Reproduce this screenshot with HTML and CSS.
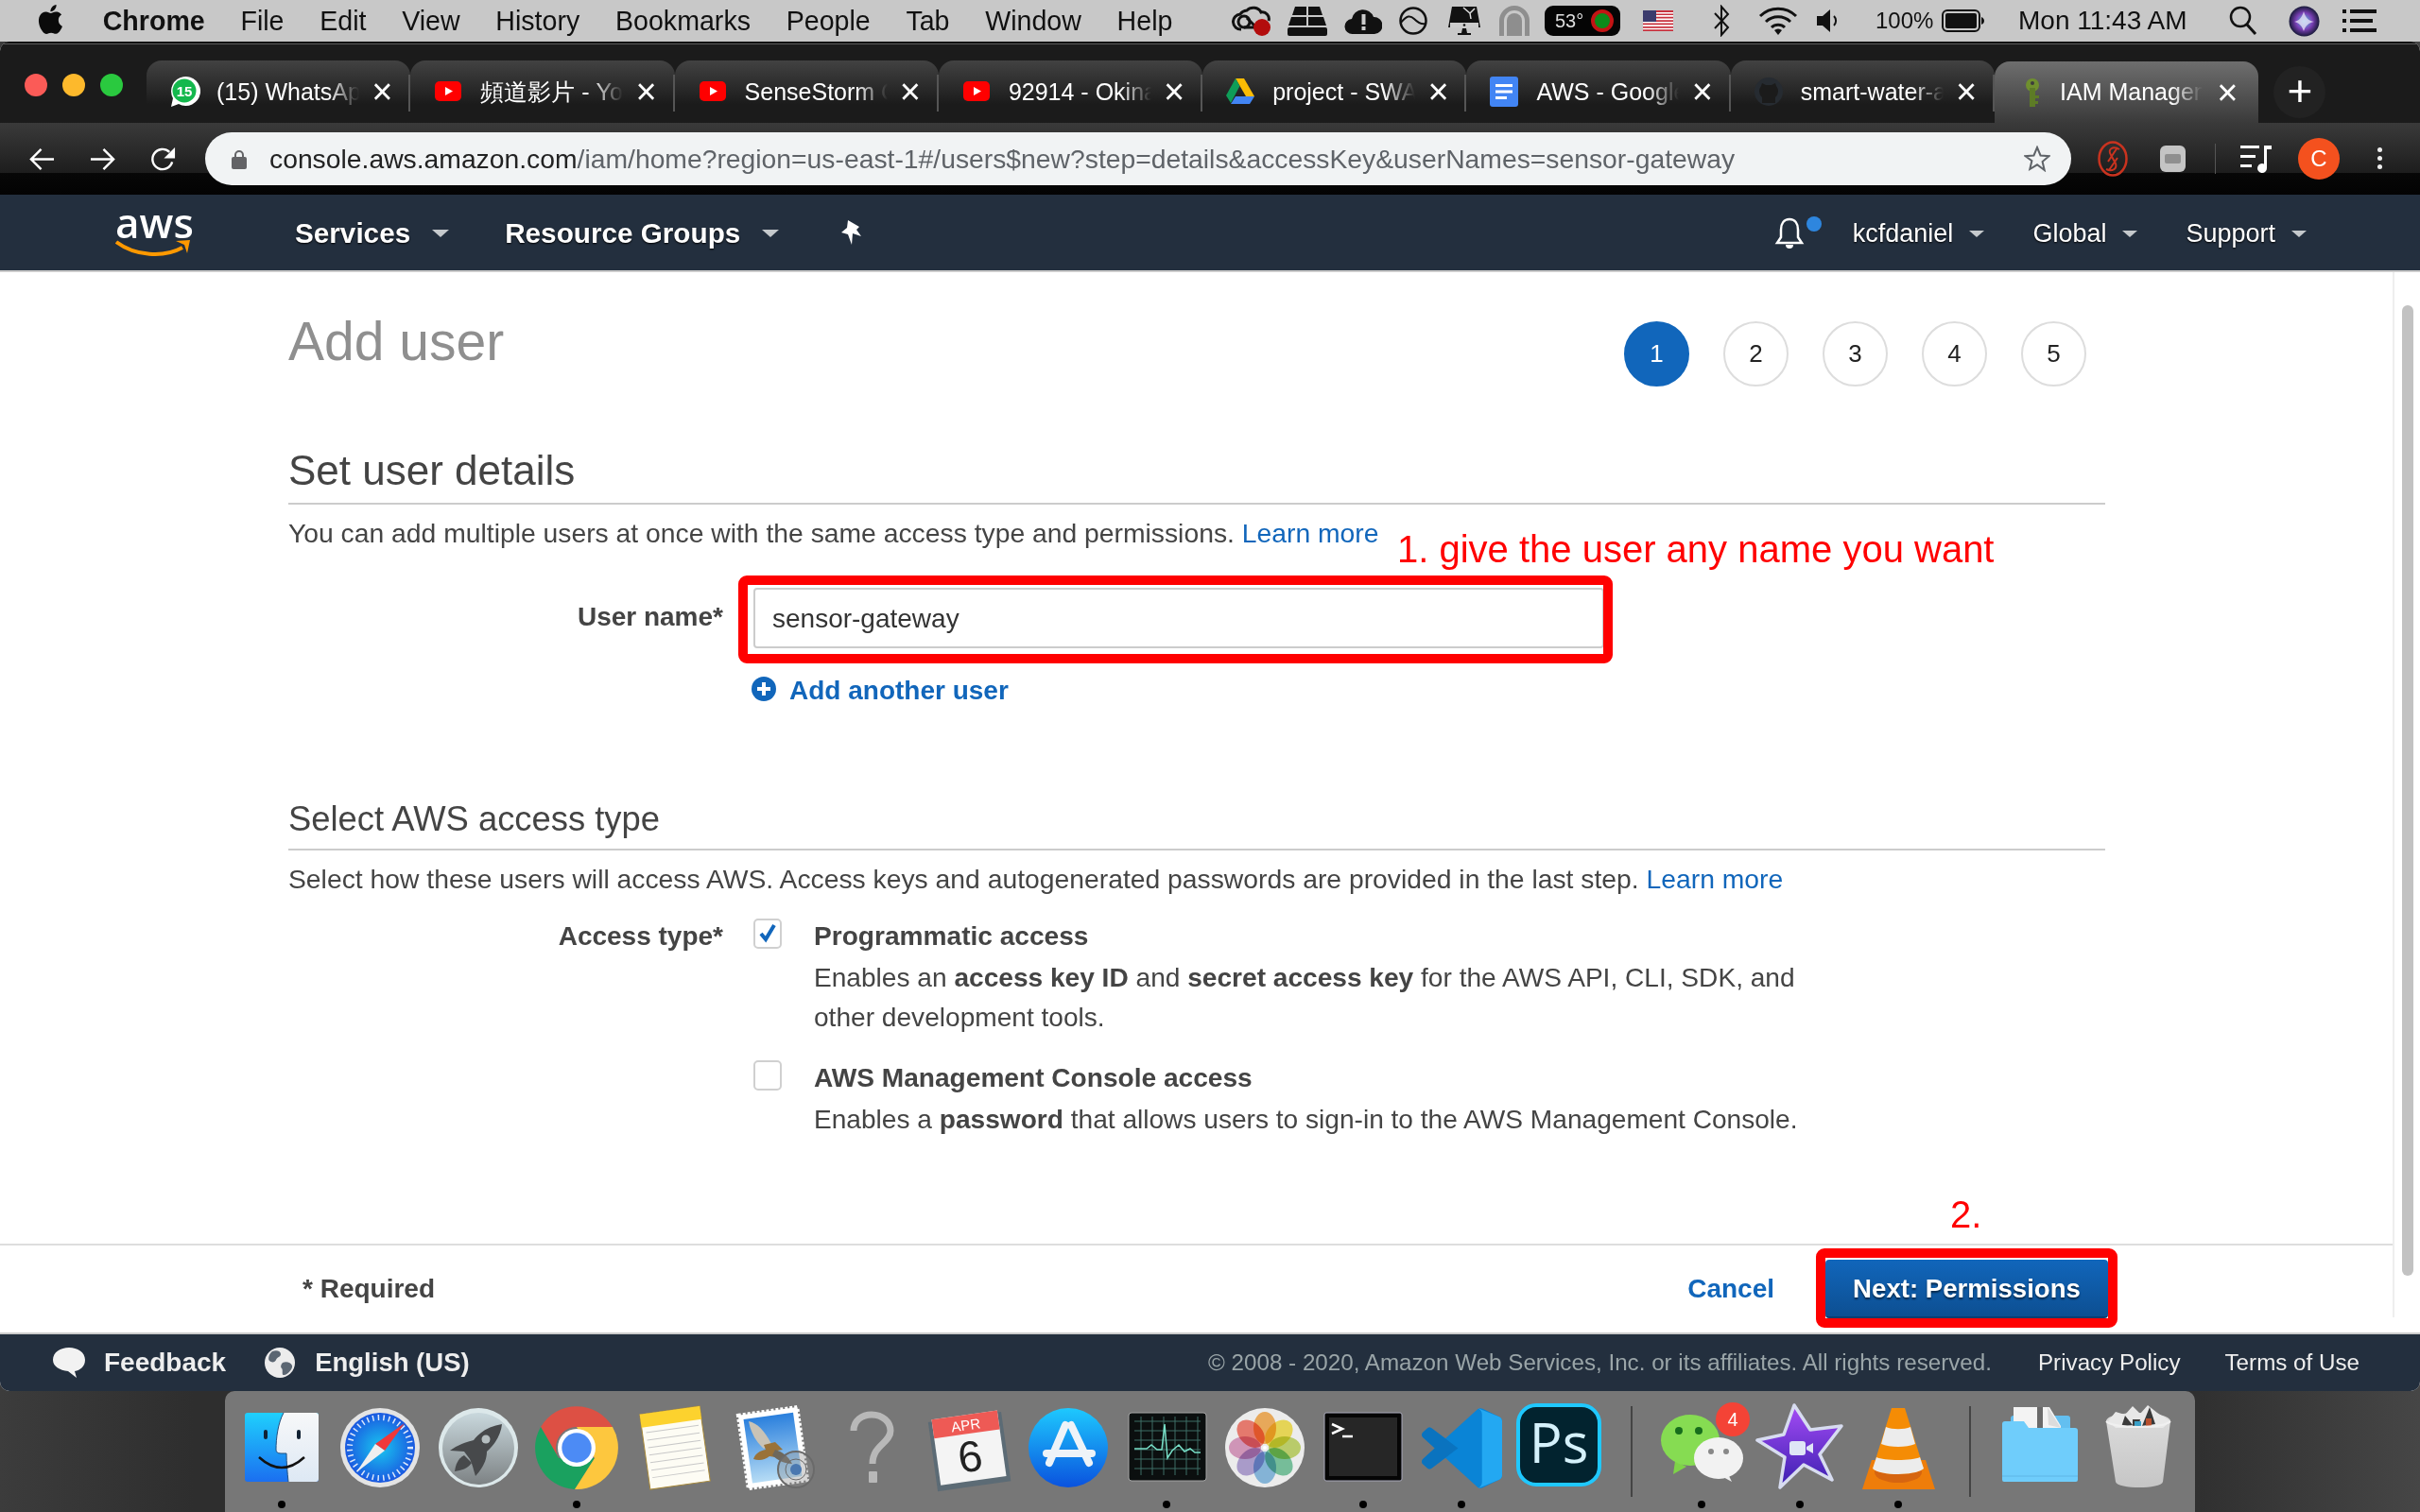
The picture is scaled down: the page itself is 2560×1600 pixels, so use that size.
FILE: index.html
```html
<!DOCTYPE html>
<html lang="en">
<head>
  <meta charset="UTF-8" />
  <title>IAM Management Console</title>
  <link rel="stylesheet" href="styles.css">
</head>
<body>
  <!-- mac menu bar -->
  <div class="menubar">
    <svg class="apple" viewBox="0 0 24 24"><path d="M18.71 19.5c-.83 1.24-1.71 2.45-3.05 2.47-1.34.03-1.77-.79-3.29-.79-1.53 0-2 .77-3.27.82-1.31.05-2.3-1.32-3.14-2.53C4.25 17 2.94 12.45 4.7 9.39c.87-1.52 2.43-2.48 4.12-2.51 1.28-.02 2.5.87 3.29.87.78 0 2.26-1.07 3.81-.91.65.03 2.47.26 3.64 1.98-.09.06-2.17 1.28-2.15 3.81.03 3.02 2.65 4.03 2.68 4.04-.03.07-.42 1.44-1.38 2.83M13 3.5c.73-.83 1.94-1.46 2.94-1.5.13 1.17-.34 2.35-1.04 3.19-.69.85-1.83 1.51-2.95 1.42-.15-1.15.41-2.35 1.05-3.11z"/></svg>
    <span class="menu-app">Chrome</span>
    <span>File</span><span>Edit</span><span>View</span><span>History</span><span>Bookmarks</span><span>People</span><span>Tab</span><span>Window</span><span>Help</span>
    <div class="status">
      <svg class="st st-cc" viewBox="0 0 41 32"><path d="M10 25a8 8 0 0 1-1-16 9 8 0 0 1 7-4 9 8 0 0 1 15 2 7 7 0 0 1 8 9" fill="none" stroke="#111" stroke-width="3"/><circle cx="13" cy="17" r="6" fill="none" stroke="#111" stroke-width="3"/><path d="M13 23h14M16 13l8 8" stroke="#111" stroke-width="3"/><circle cx="32" cy="23" r="9" fill="#b30d0d"/></svg>
      <svg class="st st-grid" viewBox="0 0 42 32"><path d="M8 1h12v9H5zM22 1h12l3 9H22zM4 12h16v9H1zM22 12h16l3 9H22z" fill="#111"/><rect x="0" y="23" width="42" height="9" rx="2" fill="#111"/></svg>
      <svg class="st st-cloud" viewBox="0 0 40 32"><path d="M9 30a8 8 0 0 1-1-16 12 12 0 0 1 23-2 9 9 0 0 1 1 18z" fill="#111"/><rect x="18.500" y="9" width="4" height="11" fill="#ccc"/><rect x="18.500" y="22" width="4" height="4" fill="#ccc"/></svg>
      <svg class="st st-ring" viewBox="0 0 30 32"><circle cx="15" cy="16" r="13.500" fill="none" stroke="#111" stroke-width="2.500"/><path d="M2 18c6-8 10-8 14-4s8 6 12 5" fill="none" stroke="#111" stroke-width="2"/></svg>
      <svg class="st st-imac" viewBox="0 0 34 32"><path d="M4 1h26l4 22H0z" fill="#111"/><rect x="2" y="18" width="30" height="5" fill="#ccc"/><circle cx="17" cy="20.500" r="1.300" fill="#111"/><path d="M15 24h4l1 5h4v2H10v-2h4z" fill="#111"/><path d="M16 2l7 6 5-5M23 8l1 6" stroke="#ddd" stroke-width="1.500" fill="none"/></svg>
      <svg class="st st-arch" viewBox="0 0 32 32"><path d="M0 32V16a16 16 0 0 1 32 0v16h-5V16a11 11 0 0 0-22 0v16z" fill="#8e8e8e"/><path d="M8 32V16a8 8 0 0 1 16 0v16z" fill="#8e8e8e"/></svg>
      <div class="temp">53°<span class="temp-dot"></span></div>
      <svg class="st st-flag" viewBox="0 0 32 22"><rect width="32" height="22" fill="#fff"/><path d="M0 0h32v2H0zM0 3.400h32v1.700H0zM0 6.800h32v1.700H0zM0 10.200h32v1.700H0zM0 13.600h32v1.700H0zM0 17h32v1.700H0zM0 20.300h32V22H0z" fill="#c8313e"/><rect width="14" height="12" fill="#3b3b6d"/></svg>
      <svg class="st st-bt" viewBox="0 0 20 34"><path d="M3 9l14 15-7 8V2l7 8L3 25" fill="none" stroke="#111" stroke-width="2"/></svg>
      <svg class="st st-wifi" viewBox="0 0 42 32"><path d="M2 11a27 27 0 0 1 38 0M8 17a19 19 0 0 1 26 0M14 23a10 10 0 0 1 14 0" fill="none" stroke="#111" stroke-width="3"/><path d="M17 26a6 6 0 0 1 8 0l-4 5z" fill="#111"/></svg>
      <svg class="st st-vol" viewBox="0 0 27 30"><path d="M1 10h6l8-7v24l-8-7H1z" fill="#111"/><path d="M19 10a7 7 0 0 1 0 10" fill="none" stroke="#111" stroke-width="2"/></svg>
      <span class="st-pct">100%</span>
      <svg class="st st-batt" viewBox="0 0 45 24"><rect x="1" y="1" width="39" height="22" rx="5" fill="none" stroke="#111" stroke-width="2"/><rect x="4" y="4" width="33" height="16" rx="2" fill="#111"/><path d="M42 8c2 1 3 2 3 4s-1 3-3 4z" fill="#111"/></svg>
      <span class="st-time">Mon 11:43 AM</span>
      <svg class="st st-search" viewBox="0 0 30 32"><circle cx="12" cy="12" r="10" fill="none" stroke="#111" stroke-width="2.500"/><path d="M19 20l9 10" stroke="#111" stroke-width="3"/></svg>
      <svg class="st st-siri" viewBox="0 0 33 33"><defs><radialGradient id="siri"><stop offset="0" stop-color="#5fd3e6"/><stop offset=".55" stop-color="#7a3fb5"/><stop offset="1" stop-color="#181a3a"/></radialGradient></defs><circle cx="16.500" cy="16.500" r="16" fill="url(#siri)"/><path d="M6 17c5-1 8-4 10-11 2 7 5 10 11 11-6 1-9 4-11 10-2-6-5-9-10-10z" fill="#e6dff5" opacity=".8"/></svg>
      <svg class="st st-list" viewBox="0 0 36 26"><path d="M0 1h4v4H0zM8 1h28v4H8zM0 11h4v4H0zM8 11h24v4H8zM0 21h4v4H0zM8 21h28v4H8z" fill="#111"/></svg>
    </div>
  </div>

  <div class="desktop">
    <div class="window">
      <!-- tabs -->
      <div class="tabstrip">
        <div class="lights"><i class="red"></i><i class="amber"></i><i class="green"></i></div>
        <div class="tab">
          <svg class="fav" viewBox="0 0 34 34"><path d="M3 33l2-9A15.500 15.500 0 1 1 11 30z" fill="#fff"/><circle cx="17" cy="16" r="12.500" fill="#14b84d"/><text x="17" y="21.500" class="fav-count">15</text></svg>
          <span class="tab-title">(15) WhatsApp</span><span class="tab-x">×</span>
        </div>
        <div class="tab">
          <svg class="fav" viewBox="0 0 34 34"><rect x="3" y="6" width="28" height="21" rx="5" fill="#f00"/><path d="M14 12l8 4.500-8 4.500z" fill="#fff"/></svg>
          <span class="tab-title">頻道影片 - You</span><span class="tab-x">×</span>
        </div>
        <div class="tab">
          <svg class="fav" viewBox="0 0 34 34"><rect x="3" y="6" width="28" height="21" rx="5" fill="#f00"/><path d="M14 12l8 4.500-8 4.500z" fill="#fff"/></svg>
          <span class="tab-title">SenseStorm C</span><span class="tab-x">×</span>
        </div>
        <div class="tab">
          <svg class="fav" viewBox="0 0 34 34"><rect x="3" y="6" width="28" height="21" rx="5" fill="#f00"/><path d="M14 12l8 4.500-8 4.500z" fill="#fff"/></svg>
          <span class="tab-title">92914 - Okina</span><span class="tab-x">×</span>
        </div>
        <div class="tab">
          <svg class="fav" viewBox="0 0 34 34"><path d="M12 3h9l11 19h-9z" fill="#fbbc04"/><path d="M12 3l4.500 8L7 29l-5-8z" fill="#0f9d58"/><path d="M7 30l5-8h20l-5 8z" fill="#4285f4"/></svg>
          <span class="tab-title">project - SWA</span><span class="tab-x">×</span>
        </div>
        <div class="tab">
          <svg class="fav" viewBox="0 0 34 34"><rect x="2" y="1" width="30" height="32" rx="3" fill="#4285f4"/><path d="M8 9h18v3H8zM8 15.500h18v3H8zM8 22h12v3H8z" fill="#fff"/></svg>
          <span class="tab-title">AWS - Google</span><span class="tab-x">×</span>
        </div>
        <div class="tab">
          <svg class="fav" viewBox="0 0 34 34"><circle cx="17" cy="17" r="15" fill="#262b31"/><path d="M10 29v-6c-2-2-3-4-3-7 0-2 1-3 2-5l1-3 4 2h6l4-2 1 3c1 2 2 3 2 5 0 3-1 5-3 7v6z" fill="#1b1b1b"/></svg>
          <span class="tab-title">smart-water-a</span><span class="tab-x">×</span>
        </div>
        <div class="tab tab-active">
          <svg class="fav" viewBox="0 0 34 34"><circle cx="17" cy="9" r="7" fill="#6f8f2e"/><rect x="14" y="12" width="6" height="20" fill="#5d7b26"/><path d="M20 20h4v3h-4zM20 26h3v3h-3z" fill="#5d7b26"/><circle cx="17" cy="7" r="2" fill="#3c3c3c"/></svg>
          <span class="tab-title">IAM Managem</span><span class="tab-x">×</span>
        </div>
        <div class="new-tab">+</div>
      </div>

      <!-- address bar -->
      <div class="toolbar">
        <svg class="tool-icon" viewBox="0 0 28 28"><path d="M27 14H3M13 3L2 14l11 11" fill="none" stroke="#fff" stroke-width="2.500"/></svg>
        <svg class="tool-icon" viewBox="0 0 28 28"><path d="M1 14h24M15 3l11 11-11 11" fill="none" stroke="#fff" stroke-width="2.500"/></svg>
        <svg class="tool-icon" viewBox="0 0 28 28"><path d="M24 17a11 11 0 1 1-3-11" fill="none" stroke="#fff" stroke-width="2.500"/><path d="M27 1v12H15z" fill="#fff"/></svg>
        <div class="omnibox">
          <svg class="lock" viewBox="0 0 16 21"><path d="M4 9V6a4 4 0 0 1 8 0v3" fill="none" stroke="#636366" stroke-width="2"/><rect y="8" width="16" height="13" rx="2" fill="#636366"/></svg>
          <div class="url"><b>console.aws.amazon.com</b>/iam/home?region=us-east-1#/users$new?step=details&amp;accessKey&amp;userNames=sensor-gateway</div>
          <svg class="star" viewBox="0 0 28 28"><path d="M14 2l3.500 8.500 9 .7-6.900 5.900 2.100 8.900L14 20.300l-7.700 4.700 2.100-8.900L1.500 11.200l9-.7z" fill="none" stroke="#5f6368" stroke-width="2"/></svg>
        </div>
        <svg class="ext ext-s" viewBox="0 0 32 38"><ellipse cx="16" cy="19" rx="14.500" ry="17.500" fill="none" stroke="#c9331f" stroke-width="2.500"/><path d="M23 9c-7-4-13 0-9 6l5 9c2 6-4 9-10 6M11 22l10-15M12 31l9-13" fill="none" stroke="#c9331f" stroke-width="2"/></svg>
        <svg class="ext ext-g" viewBox="0 0 27 28"><rect width="27" height="28" rx="6" fill="#c4c4c4"/><rect x="5" y="9" width="17" height="10" rx="2" fill="#8f8f8f"/></svg>
        <span class="tool-sep"></span>
        <svg class="ext ext-m" viewBox="0 0 33 32"><path d="M0 2h20v3H0zM0 12h16v3H0zM0 22h12v3H0zM25 2h8v4h-5v20a5 5 0 1 1-3-4.500z" fill="#fff"/></svg>
        <div class="avatar">C</div>
        <div class="kebab"><i></i><i></i><i></i></div>
      </div>

      <!-- aws console header -->
      <nav class="awsnav">
        <div class="aws-logo">
          <span>aws</span>
          <svg viewBox="0 0 80 20"><path d="M1 4c20 15 50 17 70 6" fill="none" stroke="#f90" stroke-width="4"/><path d="M64 3l15-1-3 14-3-9z" fill="#f90"/></svg>
        </div>
        <a class="nav-main nav-services">Services<i class="caret"></i></a>
        <a class="nav-main nav-groups">Resource Groups<i class="caret"></i></a>
        <svg class="pin" viewBox="0 0 24 26"><path d="M7 0l12 7-3 3 5 7-9-3-1 12-4-11-7-2 6-5z" fill="#fff"/></svg>
        <div class="nav-right">
          <svg class="bell" viewBox="0 0 52 36"><path d="M16 3c6 0 9 5 9 11v8l4 6H3l4-6v-8C7 8 10 3 16 3z" fill="none" stroke="#fff" stroke-width="2.500"/><path d="M12 30a4 4 0 0 0 8 0z" fill="#fff"/><circle cx="42" cy="8" r="8" fill="#2e86de"/></svg>
          <a>kcfdaniel<i class="caret small"></i></a>
          <a>Global<i class="caret small"></i></a>
          <a>Support<i class="caret small"></i></a>
        </div>
      </nav>

      <!-- page -->
      <div class="main">
        <div class="main-row">
          <div class="page">
            <div class="content">
              <div class="page-head">
                <h1>Add user</h1>
                <ol class="steps">
                  <li class="current">1</li><li>2</li><li>3</li><li>4</li><li>5</li>
                </ol>
              </div>

              <h2 class="section-big">Set user details</h2>
              <p class="lead">You can add multiple users at once with the same access type and permissions. <a>Learn more</a></p>
              <div class="field field-name">
                <label>User name*</label>
                <div class="control">
                  <div class="text-input">sensor-gateway</div>
                  <a class="add-user">
                    <svg viewBox="0 0 26 26"><circle cx="13" cy="13" r="13" fill="#1166bb"/><path d="M11 6h4v5h5v4h-5v5h-4v-5H6v-4h5z" fill="#fff"/></svg>
                    Add another user
                  </a>
                </div>
              </div>

              <h2 class="section-small">Select AWS access type</h2>
              <p class="lead">Select how these users will access AWS. Access keys and autogenerated passwords are provided in the last step. <a>Learn more</a></p>
              <div class="field field-access">
                <label>Access type*</label>
                <div class="control">
                  <div class="option">
                    <span class="check on"><svg viewBox="0 0 20 22"><path d="M3 12l5 6L17 3" fill="none" stroke="#1166bb" stroke-width="4"/></svg></span>
                    <div class="option-body">
                      <strong>Programmatic access</strong>
                      <p>Enables an <b>access key ID</b> and <b>secret access key</b> for the AWS API, CLI, SDK, and<br>other development tools.</p>
                    </div>
                  </div>
                  <div class="option option-2">
                    <span class="check"></span>
                    <div class="option-body">
                      <strong>AWS Management Console access</strong>
                      <p>Enables a <b>password</b> that allows users to sign-in to the AWS Management Console.</p>
                    </div>
                  </div>
                </div>
              </div>
            </div>

            <div class="actions">
              <span class="required">* Required</span>
              <a class="cancel">Cancel</a>
              <button class="next">Next: Permissions</button>
            </div>
          </div>
          <div class="scrollbar"><div class="thumb"></div></div>
        </div>
      </div>

      <footer class="console-foot">
        <svg class="foot-ico" viewBox="0 0 36 34"><path d="M18 1c9 0 17 5 17 13 0 7-5 11-11 12l2 7-9-7C8 25 1 21 1 14 1 6 9 1 18 1z" fill="#f2f2f2"/></svg>
        <b class="foot-b">Feedback</b>
        <svg class="foot-ico foot-globe" viewBox="0 0 32 32"><circle cx="16" cy="16" r="16" fill="#ececec"/><path d="M8 4c5-2 9 0 9 3s-4 3-5 6-5 3-7 1 0-8 3-10zM19 16c4-2 9 0 10 3s-4 9-8 10-1-5-3-7 0-5 1-6z" fill="#5b6672"/></svg>
        <b class="foot-b foot-lang">English (US)</b>
        <span class="copyright">© 2008 - 2020, Amazon Web Services, Inc. or its affiliates. All rights reserved.</span>
        <a class="foot-link">Privacy Policy</a>
        <a class="foot-link foot-terms">Terms of Use</a>
      </footer>
    </div>

    <!-- dock -->
    <div class="dock">
      <div class="dock-item on">
        <svg viewBox="0 0 96 96"><defs><linearGradient id="fl" x1="0" y1="0" x2="0" y2="1"><stop offset="0" stop-color="#1fd0fd"/><stop offset="1" stop-color="#1b6ff0"/></linearGradient><linearGradient id="fr" x1="0" y1="0" x2="0" y2="1"><stop offset="0" stop-color="#f7f8f9"/><stop offset="1" stop-color="#dde8f4"/></linearGradient></defs><rect x="9" y="11" width="78" height="73" rx="3" fill="url(#fl)"/><path d="M50 11C44 22 42 38 42 50q0 4 5 4h6c0 10 1 20 2 30h29a3 3 0 0 0 3-3V14a3 3 0 0 0-3-3z" fill="url(#fr)"/><path d="M50 11C44 22 42 38 42 50q0 4 5 4h6c0 10 1 20 2 30" fill="none" stroke="#23507f" stroke-width="1"/><rect x="29" y="29" width="4" height="10" rx="2" fill="#123"/><rect x="64" y="29" width="4" height="10" rx="2" fill="#123"/><path d="M24 58q24 22 48 0" fill="none" stroke="#111" stroke-width="2.500"/></svg>
      </div>
      <div class="dock-item">
        <svg viewBox="0 0 96 96"><defs><radialGradient id="saf"><stop offset="0" stop-color="#19c6f0"/><stop offset="1" stop-color="#1a58e0"/></radialGradient></defs><circle cx="48" cy="48" r="42" fill="#e4e4e4"/><circle cx="48" cy="48" r="37" fill="url(#saf)"/><circle cx="48" cy="48" r="32" fill="none" stroke="#fff" stroke-width="6" stroke-dasharray="1.500 4.200" opacity=".85"/><path d="M74 22L43 44l10 7z" fill="#f0383a"/><path d="M23 74l20-30 10 7z" fill="#efefef"/></svg>
      </div>
      <div class="dock-item">
        <svg viewBox="0 0 96 96"><defs><linearGradient id="lp" x1="0" y1="0" x2="0" y2="1"><stop offset="0" stop-color="#c9d8dd"/><stop offset="1" stop-color="#7d8284"/></linearGradient></defs><circle cx="48" cy="48" r="42" fill="#dce8ea"/><circle cx="48" cy="49" r="38" fill="url(#lp)"/><path d="M73 23C60 25 50 31 43 40c-8 2-17 5-25 11l15 1 6 8c3 6 4 12 6 18 7-8 12-16 12-26 9-8 15-18 16-29z" fill="#47494b"/><path d="M33 56c-7 4-9 10-10 17 7-1 14-3 18-9z" fill="#47494b"/><circle cx="56" cy="39" r="4.500" fill="#b5bec0"/></svg>
      </div>
      <div class="dock-item on">
        <svg viewBox="0 0 96 96"><path d="M10 26A44 44 0 0 1 86 26H48A22 22 0 0 0 29 59z" fill="#dd5044"/><path d="M10 26A44 44 0 0 0 46 92L67 59H29z" fill="#1aa15f"/><path d="M86 26A44 44 0 0 1 46 92L67 59 48 26z" fill="#fdc73e"/><circle cx="48" cy="48" r="20" fill="#fff"/><circle cx="48" cy="48" r="15.700" fill="#4c8bf5"/></svg>
      </div>
      <div class="dock-item">
        <svg viewBox="0 0 96 96"><g transform="rotate(-8 48 48)"><rect x="16" y="8" width="64" height="80" fill="#fdfcf4" stroke="#a98a3a"/><rect x="16" y="8" width="64" height="14" fill="#fcd22e"/><path d="M20 28h56M20 36h56M20 44h56M20 52h56M20 60h56M20 68h56M20 76h56" stroke="#c8c8c8"/></g></svg>
      </div>
      <div class="dock-item">
        <svg viewBox="0 0 96 96"><defs><linearGradient id="sky" x1="0" y1="0" x2="0" y2="1"><stop offset="0" stop-color="#2b80dd"/><stop offset="1" stop-color="#b6dcf5"/></linearGradient></defs><g transform="rotate(-8 48 48)"><rect x="16" y="9" width="63" height="78" fill="#fff" stroke="#fff" stroke-width="4" stroke-dasharray="3 2"/><rect x="21" y="14" width="53" height="68" fill="url(#sky)"/></g><path d="M22 20c10 2 18 12 24 24l-8 5C30 42 24 32 22 20z" fill="#c9c3b6"/><path d="M38 45l12-3 8 8-6 1-2 7-6-1c-5 4-11 5-17 3 2-6 7-9 13-10z" fill="#9a7238"/><path d="M50 50c7 2 14 7 18 15-8 0-16-4-21-9z" fill="#6e685c"/><circle cx="72" cy="71" r="19" fill="#8a8a8a" fill-opacity=".35" stroke="#6a6a6a" stroke-width="2"/><circle cx="72" cy="71" r="11" fill="none" stroke="#6a6a6a"/><circle cx="72" cy="71" r="6" fill="#4a78b0"/></svg>
      </div>
      <div class="dock-item">
        <svg viewBox="0 0 96 96"><path d="M29 30c0-11 9-17 19-17 12 0 20 8 20 17 0 13-19 15-19 35" fill="none" stroke="#b8b8b8" stroke-width="7"/><rect x="45" y="73" width="9" height="12" rx="1" fill="#b8b8b8"/></svg>
      </div>
      <div class="dock-item">
        <svg viewBox="0 0 96 96"><g transform="rotate(-8 48 48)"><rect x="8" y="15" width="78" height="74" fill="#5c6b75"/><rect x="12" y="13" width="70" height="70" fill="#f4f4f4"/><rect x="12" y="13" width="70" height="20" fill="#ee5a55"/><text x="47" y="29" class="cal-month">APR</text><text x="47" y="73" class="cal-day">6</text></g></svg>
      </div>
      <div class="dock-item">
        <svg viewBox="0 0 96 96"><defs><linearGradient id="as" x1="0" y1="0" x2="0" y2="1"><stop offset="0" stop-color="#1ec9fe"/><stop offset="1" stop-color="#0a52de"/></linearGradient></defs><circle cx="48" cy="48" r="42" fill="url(#as)"/><path d="M45 24L28 64M51 24l19 40M25 54h48" fill="none" stroke="#eef3f8" stroke-width="8" stroke-linecap="round"/></svg>
      </div>
      <div class="dock-item on">
        <svg viewBox="0 0 96 96"><rect x="8" y="11" width="82" height="72" rx="3" fill="#0b0f0f" stroke="#a5a5a5"/><g stroke="#3f6f66" stroke-width="1"><path d="M14 20h70M14 30h70M14 40h70M14 50h70M14 60h70M14 70h70M21 15v62M33 15v62M45 15v62M57 15v62M69 15v62M81 15v62"/></g><path d="M14 49h13l5-4 6 5 5 0 3-27 3 36 5-8 7-6 6 7 6-3 5 4h6" fill="none" stroke="#78e0c8" stroke-width="1.500"/></svg>
      </div>
      <div class="dock-item">
        <svg viewBox="0 0 96 96"><circle cx="48" cy="48" r="42" fill="#ececec"/><g class="petals"><ellipse cx="48" cy="27" rx="12" ry="17" fill="#f9a234"/><ellipse cx="48" cy="27" rx="12" ry="17" fill="#f6de2f" transform="rotate(45 48 48)"/><ellipse cx="48" cy="27" rx="12" ry="17" fill="#b9d24a" transform="rotate(90 48 48)"/><ellipse cx="48" cy="27" rx="12" ry="17" fill="#5cbf8c" transform="rotate(135 48 48)"/><ellipse cx="48" cy="27" rx="12" ry="17" fill="#6fb1e2" transform="rotate(180 48 48)"/><ellipse cx="48" cy="27" rx="12" ry="17" fill="#a38fd0" transform="rotate(225 48 48)"/><ellipse cx="48" cy="27" rx="12" ry="17" fill="#d887b6" transform="rotate(270 48 48)"/><ellipse cx="48" cy="27" rx="12" ry="17" fill="#f5604f" transform="rotate(315 48 48)"/></g><circle cx="48" cy="48" r="2" fill="#fff"/></svg>
      </div>
      <div class="dock-item on">
        <svg viewBox="0 0 96 96"><rect x="7" y="11" width="82" height="72" rx="2" fill="#050505" stroke="#aab"/><rect x="12" y="16" width="72" height="62" fill="#262626"/><path d="M15 23l11 5-11 5" fill="none" stroke="#fff" stroke-width="2.500"/><path d="M26 36h11" stroke="#fff" stroke-width="2.500"/></svg>
      </div>
      <div class="dock-item on">
        <svg viewBox="0 0 96 96"><g transform="translate(6 6) scale(.85)"><path d="M70.900 99.300c1.600.6 3.400.6 5-.2l20.600-9.900c2.100-1 3.500-3.200 3.500-5.600V16.400c0-2.400-1.400-4.600-3.500-5.600L75.900.9c-2.100-1-4.600-.8-6.400.5-.3.200-.5.400-.7.700L29.400 38 12.200 25c-1.600-1.200-3.800-1.100-5.300.2l-5.500 5c-1.800 1.700-1.800 4.500 0 6.200L16.200 50 1.400 63.600c-1.800 1.700-1.800 4.500 0 6.200l5.500 5c1.500 1.300 3.700 1.400 5.300.2L29.400 62l39.400 35.900c.6.600 1.300 1.100 2.100 1.400zM75 27.300L45.100 50 75 72.700z" fill="#0a84d6"/><path d="M70 .2l26.500 10.600c2.100 1 3.500 3.200 3.500 5.600v67.200c0 2.400-1.400 4.600-3.500 5.600L70 100c3-2 5-4 5-8V8c0-4-2-6-5-7.800z" fill="#23a8f2"/><path d="M29.400 38L12.200 25c-1.600-1.200-3.800-1.100-5.300.2l-5.500 5c-1.800 1.700-1.800 4.500 0 6.200L16.200 50 29.400 38zM16.200 50L1.400 63.600c-1.800 1.700-1.800 4.500 0 6.200l5.500 5c1.500 1.300 3.700 1.400 5.300.2L45.100 50 29.400 38z" fill="#0a6cb5" opacity=".7"/></g></svg>
      </div>
      <div class="dock-item">
        <svg viewBox="0 0 96 96"><rect x="4" y="3" width="86" height="84" rx="19" fill="#02232f" stroke="#1fc8ff" stroke-width="4"/><text x="47" y="64" class="ps-text">Ps</text></svg>
      </div>
      <div class="dock-sep"></div>
      <div class="dock-item on">
        <svg viewBox="0 0 96 96"><path d="M20 62l-2 14 14-8z" fill="#7ed348"/><ellipse cx="36" cy="40" rx="31" ry="27" fill="#86dc52"/><circle cx="24" cy="30" r="4" fill="#176d1c"/><circle cx="45" cy="30" r="4" fill="#176d1c"/><path d="M76 76l4 8-11-6z" fill="#eee"/><ellipse cx="66" cy="59" rx="26" ry="22" fill="#f2f2f2"/><circle cx="58" cy="52" r="3" fill="#888"/><circle cx="74" cy="52" r="3" fill="#888"/><circle cx="81" cy="18" r="18" fill="#f44336"/><text x="81" y="25" class="badge-num">4</text></svg>
      </div>
      <div class="dock-item on">
        <svg viewBox="0 0 96 96"><defs><linearGradient id="im" x1="0" y1="0" x2="0" y2="1"><stop offset="0" stop-color="#a54cf5"/><stop offset="1" stop-color="#3a1fb0"/></linearGradient></defs><path d="M42 3l17 26 33-4-23 30 13 27-30-16-25 24 5-32L3 40l28-6z" fill="url(#im)" stroke="#d7dcf0" stroke-width="3.500" stroke-linejoin="round"/><rect x="37" y="41" width="17" height="15" rx="3" fill="#dfe6f6"/><path d="M55 47l7-4v11l-7-4z" fill="#dfe6f6"/></svg>
      </div>
      <div class="dock-item on">
        <svg viewBox="0 0 96 96"><path d="M20 61L10 92h77L77 61z" fill="#ee7d0a"/><ellipse cx="48" cy="74" rx="25" ry="11" fill="#d66510"/><path d="M41 6h14l20 64c-8 8-46 8-54 0z" fill="#f58c05"/><path d="M35 26c7 3 19 3 26 0l5 18c-9 4-27 4-36 0z M25 58c8 4 38 4 46 0l4 12c-8 8-46 8-54 0z" fill="#ececec"/></svg>
      </div>
      <div class="dock-sep"></div>
      <div class="dock-item">
        <svg viewBox="0 0 96 96"><rect x="17" y="14" width="63" height="40" rx="3" fill="#63bff0"/><path d="M20 5h38l12 20v20H20z" fill="#f3f3f3"/><path d="M56 5l14 22-13-3z" fill="#dcdcdc"/><rect x="45" y="5" width="6" height="30" fill="#6a6a6a"/><path d="M8 23a3 3 0 0 1 3-3h20l5 7h49a3 3 0 0 1 3 3v52a2 2 0 0 1-2 2H10a2 2 0 0 1-2-2z" fill="#6fcdfb"/><path d="M8 78h80" stroke="#5eb6e6"/></svg>
      </div>
      <div class="dock-item">
        <svg viewBox="0 0 96 96"><defs><linearGradient id="bin" x1="0" y1="0" x2="0" y2="1"><stop offset="0" stop-color="#dcdcdc"/><stop offset="1" stop-color="#c6c6c6"/></linearGradient></defs><path d="M14 20c0-12 68-12 68 0l-8 64c-2 8-48 8-50 0z" fill="url(#bin)"/><path d="M16 20l8-10 10 3 8-9 8 8 8-9 10 8 14 9-8 7H24z" fill="#e8e8e8"/><path d="M34 14l8 10-12 2zM60 5l-8 20 14-2zM42 18h8l-2 8h-6z" fill="#3a3a3a"/><path d="M44 20h7v6h-7z" fill="#3aa0c8"/><path d="M56 17h6v8h-6z" fill="#b8502e"/><path d="M14 20c8 8 60 8 68 0" fill="none" stroke="#f0f0f0" stroke-width="2"/></svg>
      </div>
    </div>
  </div>

  <!-- red markup drawn on top of the screenshot -->
  <div class="mark mark-name"></div>
  <div class="mark mark-next"></div>
  <div class="note note-1">1. give the user any name you want</div>
  <div class="note note-2">2.</div>
</body>
</html>
```

FILE: styles.css
```css
* {
  box-sizing: border-box;
}
html, body {
  margin: 0;
  width: 2560px;
  height: 1600px;
  overflow: hidden;
}
body {
  position: relative;
  font-family: "Liberation Sans", Arial, sans-serif;
  display: flex;
  flex-direction: column;
  background: #333;
}
a {
  color: inherit;
  text-decoration: none;
}

/* menu bar */
.menubar {
  height: 44px;
  flex: none;
  display: flex;
  align-items: center;
  gap: 37.700px;
  padding-left: 35px;
  background: #c8c8c8;
  color: #111;
  font-size: 28.600px;
}
.apple {
  width: 37px;
  height: 37px;
  fill: #0b0b0b;
  margin: -4px -1px 0 0;
}
.menu-app {
  font-weight: bold;
}
.status {
  margin-left: auto;
  padding-right: 46px;
  display: flex;
  align-items: center;
  font-size: 28px;
}
.st {
  flex: none;
  display: block;
}
.st-cc { width: 41px; height: 32px; }
.st-grid { width: 42px; height: 32px; margin-left: 18px; }
.st-cloud { width: 40px; height: 32px; margin-left: 18px; }
.st-ring { width: 30px; height: 32px; margin-left: 18px; }
.st-imac { width: 34px; height: 32px; margin-left: 22px; }
.st-arch { width: 32px; height: 32px; margin-left: 20px; }
.temp {
  width: 80px;
  height: 32px;
  margin-left: 16px;
  border-radius: 9px;
  background: #050505;
  color: #ddd;
  font-size: 20px;
  padding-left: 11px;
  display: flex;
  align-items: center;
  gap: 8px;
}
.temp-dot {
  width: 24px;
  height: 24px;
  border-radius: 50%;
  background: #0c8a1a;
  border: 4px solid #c21414;
}
.st-flag { width: 32px; height: 22px; margin-left: 24px; }
.st-bt { width: 20px; height: 34px; margin-left: 41px; }
.st-wifi { width: 42px; height: 32px; margin-left: 29px; }
.st-vol { width: 27px; height: 30px; margin-left: 19px; }
.st-pct { width: 62px; margin-left: 36px; font-size: 24px; white-space: nowrap; }
.st-batt { width: 45px; height: 24px; margin-left: 8px; }
.st-time { width: 182px; margin-left: 36px; white-space: nowrap; }
.st-search { width: 30px; height: 32px; margin-left: 41px; }
.st-siri { width: 33px; height: 33px; margin-left: 33px; }
.st-list { width: 36px; height: 26px; margin-left: 24px; }

/* desktop and window */
.desktop {
  flex: 1;
  display: flex;
  flex-direction: column;
  background: linear-gradient(90deg, #3c3c3c, #2e2e2e 8%, #2e2e2e 90%, #464646);
}
.window {
  height: 1428px;
  flex: none;
  display: flex;
  flex-direction: column;
  border-radius: 10px;
  overflow: hidden;
  background: #fff;
}
.tabstrip {
  height: 86px;
  flex: none;
  display: flex;
  align-items: flex-end;
  padding-left: 155px;
  position: relative;
  background: #1b1b1b;
  border-top: 2px solid #111;
  box-shadow: inset 0 1px 0 #5c5c5c;
}
.lights {
  position: absolute;
  left: 26px;
  top: 32px;
  display: flex;
  gap: 16px;
}
.lights i {
  width: 24px;
  height: 24px;
  border-radius: 50%;
}
.red { background: #fb5b57; }
.amber { background: #fdb92c; }
.green { background: #2ac93f; }
.tab {
  width: 279.300px;
  height: 66px;
  flex: none;
  display: flex;
  align-items: center;
  padding: 0 17px 0 23px;
  border-radius: 16px 16px 0 0;
  background: linear-gradient(#424242, #1b1b1b 70%);
  color: #fff;
  font-size: 25px;
  position: relative;
}
.tab::after {
  content: "";
  position: absolute;
  right: 0;
  top: 15px;
  height: 39px;
  width: 2px;
  background: #555;
}
.fav {
  width: 34px;
  height: 34px;
  flex: none;
}
.fav-count {
  font-size: 15px;
  font-weight: bold;
  fill: #fff;
  text-anchor: middle;
}
.tab-title {
  width: 151px;
  flex: none;
  margin-left: 17px;
  white-space: nowrap;
  overflow: hidden;
  -webkit-mask-image: linear-gradient(90deg, #000 78%, transparent 100%);
  mask-image: linear-gradient(90deg, #000 78%, transparent 100%);
}
.tab-x {
  width: 26px;
  margin-left: auto;
  text-align: center;
  font-size: 38px;
  line-height: 34px;
}
.tab-active {
  background: linear-gradient(#6e6e6e, #3a3a3a);
  height: 65px;
  padding-right: 20px;
}
.tab-active .tab-title {
  margin-left: 12px;
}
.tab-active::after {
  display: none;
}
.new-tab {
  width: 55px;
  height: 55px;
  margin: 0 0 5px 16px;
  border-radius: 50%;
  background: #222;
  color: #fff;
  font-size: 46px;
  line-height: 52px;
  text-align: center;
}

.toolbar {
  height: 76px;
  flex: none;
  display: flex;
  align-items: flex-start;
  padding: 10px 0 0 31px;
  background: linear-gradient(#3a3a3a, #1d1d1d 53px, #070707 53px, #030303);
}
.tool-icon {
  width: 27px;
  height: 27px;
  margin: 15px 37px 0 0;
  flex: none;
}
.omnibox {
  width: 1974px;
  height: 56px;
  flex: none;
  margin-left: -6px;
  display: flex;
  align-items: center;
  padding: 0 22px 0 28px;
  border-radius: 28px;
  background: #f1f3f4;
}
.lock {
  width: 16px;
  height: 21px;
  flex: none;
}
.url {
  flex: 1;
  margin-left: 24px;
  font-size: 28.300px;
  color: #5f6368;
  white-space: nowrap;
}
.url b {
  font-weight: normal;
  color: #222;
}
.star {
  width: 28px;
  height: 28px;
  flex: none;
}
.ext {
  flex: none;
}
.ext-s { width: 32px; height: 38px; margin: 9px 0 0 28px; }
.ext-g { width: 27px; height: 28px; margin: 14px 0 0 34px; }
.tool-sep {
  width: 1px;
  height: 32px;
  margin: 12px 0 0 31px;
  background: #555;
}
.ext-m { width: 33px; height: 32px; margin: 12px 0 0 26px; }
.avatar {
  width: 44px;
  height: 44px;
  margin: 6px 0 0 28px;
  border-radius: 50%;
  background: #f4511e;
  color: #fff;
  font-size: 24px;
  line-height: 44px;
  text-align: center;
}
.kebab {
  margin: 16px 0 0 40px;
  display: flex;
  flex-direction: column;
  gap: 4px;
}
.kebab i {
  width: 5px;
  height: 5px;
  border-radius: 50%;
  background: #eee;
}

/* aws header */
.awsnav {
  height: 82px;
  flex: none;
  display: flex;
  align-items: center;
  padding: 2px 120px 0 122px;
  background: #232f3e;
  border-bottom: 2px solid #ccc;
  color: #fff;
  text-shadow: 0 1px 2px #000;
}
.aws-logo {
  width: 78px;
  display: flex;
  flex-direction: column;
  color: #fff;
  font-family: "Open Sans", sans-serif;
  font-size: 44px;
  font-weight: 600;
  line-height: 32px;
  text-align: center;
  text-shadow: none;
}
.aws-logo span {
  display: block;
  margin-top: -4px;
}
.aws-logo svg {
  width: 80px;
  height: 20px;
  margin-top: 1px;
}
.nav-main {
  font-size: 29.700px;
  font-weight: bold;
  display: flex;
  align-items: center;
}
.nav-services { margin-left: 112px; }
.nav-groups { margin-left: 59px; }
.caret {
  display: block;
  margin-left: 23px;
  border-style: solid;
  border-width: 8px 9px 0;
  border-color: #c5c9cc transparent transparent;
}
.caret.small {
  margin-left: 17px;
  border-width: 7px 8px 0;
}
.pin {
  width: 24px;
  height: 26px;
  margin: -2px 0 0 66px;
}
.nav-right {
  margin-left: auto;
  display: flex;
  align-items: center;
  gap: 51px;
  font-size: 27px;
}
.nav-right a {
  display: flex;
  align-items: center;
}
.bell {
  width: 52px;
  height: 36px;
  margin-right: -20px;
}

/* page body */
.main {
  flex: 1;
  min-height: 0;
  background: #fff;
}
.main-row {
  height: 1106px;
  display: flex;
}
.page {
  flex: 1;
  display: flex;
  flex-direction: column;
}
.content {
  flex: 1;
  padding: 45px 304px 0 305px;
  color: #444;
  font-size: 28px;
  line-height: 42px;
}
.page-head {
  display: flex;
  justify-content: space-between;
}
h1 {
  margin: 0;
  font-size: 57px;
  line-height: 56px;
  font-weight: normal;
  color: #8f8f8f;
}
.steps {
  list-style: none;
  margin: 7px 20px 0 0;
  padding: 0;
  display: flex;
  gap: 36px;
}
.steps li {
  width: 69px;
  height: 69px;
  border: 2px solid #ddd;
  border-radius: 50%;
  font-size: 26px;
  line-height: 65px;
  text-align: center;
  color: #222;
}
.steps .current {
  background: #1166bb;
  border-color: #1166bb;
  color: #fff;
}
h2 {
  margin: 0;
  font-weight: normal;
  color: #444;
  border-bottom: 2px solid #ccc;
}
.section-big {
  margin-top: 64px;
  font-size: 44px;
  line-height: 50px;
  padding-bottom: 9px;
}
.section-small {
  margin-top: 94px;
  font-size: 36.400px;
  line-height: 44px;
  padding-bottom: 9px;
}
.lead {
  margin: 9px 0 0;
  font-size: 28.300px;
}
.lead a {
  color: #1166bb;
}
.field {
  display: flex;
}
.field label {
  width: 460px;
  flex: none;
  text-align: right;
  font-weight: bold;
}
.field .control {
  margin-left: 32px;
}
.field-name {
  margin-top: 37px;
}
.field-name label {
  padding-top: 10px;
}
.text-input {
  width: 900px;
  height: 64px;
  border: 2px solid #ccc;
  border-radius: 4px;
  padding: 0 18px;
  line-height: 62px;
  color: #333;
}
.add-user {
  display: flex;
  align-items: center;
  gap: 14px;
  margin: 25px 0 0 -2px;
  line-height: 40px;
  font-weight: bold;
  color: #1166bb;
}
.add-user svg {
  width: 26px;
  height: 26px;
  margin-top: -4px;
}
.field-access {
  margin-top: 19px;
}
.option {
  display: flex;
  gap: 34px;
}
.option-2 {
  margin-top: 22px;
}
.check {
  width: 30px;
  height: 32px;
  flex: none;
  margin-top: 2px;
  border: 2px solid #d0d0d0;
  border-radius: 5px;
  display: block;
}
.check svg {
  display: block;
  width: 20px;
  height: 22px;
  margin: 2px 3px;
}
.option-body {
  font-size: 28.100px;
}
.option-body strong {
  display: block;
}
.option-body p {
  margin: 2px 0 0;
  white-space: nowrap;
}

.actions {
  height: 78px;
  flex: none;
  display: flex;
  align-items: flex-start;
  padding: 15px 301px 0 320px;
  border-top: 2px solid #ddd;
  font-size: 28px;
  line-height: 62px;
  font-weight: bold;
  color: #444;
}
.cancel {
  margin-left: auto;
  color: #1166bb;
}
.next {
  width: 299px;
  height: 62px;
  margin-left: 54px;
  padding-top: 3px;
  border: 0;
  border-bottom: 2px solid #0a3d70;
  border-radius: 4px;
  background: linear-gradient(#1166bb, #0d4f92);
  color: #fff;
  font: bold 27.600px "Liberation Sans", Arial, sans-serif;
  text-shadow: 0 2px 2px #06284a;
}
.scrollbar {
  width: 29px;
  flex: none;
  padding: 35px 8px 44px 8px;
  border-left: 2px solid #eee;
  background: #fff;
}
.thumb {
  height: 1027px;
  width: 12px;
  border-radius: 6px;
  background: #c2c2c2;
}

.console-foot {
  height: 62px;
  flex: none;
  display: flex;
  align-items: center;
  padding: 0 64px 0 55px;
  background: #232f3e;
  border-top: 2px solid #ccc;
  color: #eee;
  font-size: 24.200px;
}
.foot-ico {
  width: 36px;
  height: 34px;
  flex: none;
}
.foot-b {
  margin-left: 19px;
  font-size: 28px;
}
.foot-lang {
  margin-left: 21px;
  font-size: 27.500px;
}
.foot-globe {
  width: 32px;
  height: 32px;
  margin-left: 41px;
}
.copyright {
  margin-left: auto;
  color: #9aa5a8;
}
.foot-link {
  margin-left: 49px;
}
.foot-terms {
  margin-left: 47px;
}

/* dock */
.dock {
  width: 2084px;
  height: 128px;
  margin-left: 238px;
  padding: 12px 0 0 8px;
  display: flex;
  background: #777;
  border-radius: 10px 10px 0 0;
}
.dock-item {
  width: 104px;
  flex: none;
  position: relative;
}
.dock-item svg {
  display: block;
  width: 96px;
  height: 96px;
  margin: 0 auto;
  overflow: visible;
}
.dock-item.on::after {
  content: "";
  position: absolute;
  left: 48px;
  top: 104px;
  width: 8px;
  height: 8px;
  border-radius: 50%;
  background: #000;
}
.dock-sep {
  width: 46px;
  height: 96px;
  flex: none;
  margin-top: 4px;
  position: relative;
}
.dock-sep::before {
  content: "";
  position: absolute;
  left: 23px;
  top: 0;
  bottom: 0;
  width: 2px;
  background: #444;
}
.cal-month {
  font: 15px "Liberation Sans", Arial, sans-serif;
  fill: #fff;
  text-anchor: middle;
}
.cal-day {
  font: 46px "Liberation Sans", Arial, sans-serif;
  fill: #222;
  text-anchor: middle;
}
.ps-text {
  font: 58px "Open Sans", sans-serif;
  fill: #d5f1fb;
  text-anchor: middle;
}
.badge-num {
  font: 20px "Liberation Sans", Arial, sans-serif;
  fill: #fff;
  text-anchor: middle;
}
.petals ellipse {
  opacity: .78;
  mix-blend-mode: multiply;
}

/* red markup */
.mark {
  position: absolute;
  border: 10px solid #f00;
  border-radius: 9px;
}
.mark-name {
  left: 781px;
  top: 609px;
  width: 925px;
  height: 93px;
}
.mark-next {
  left: 1921px;
  top: 1321px;
  width: 319px;
  height: 84px;
}
.note {
  position: absolute;
  color: #f00;
  font-size: 40px;
  line-height: 46px;
  white-space: nowrap;
}
.note-1 {
  left: 1478px;
  top: 558px;
}
.note-2 {
  left: 2063px;
  top: 1262px;
}
```
